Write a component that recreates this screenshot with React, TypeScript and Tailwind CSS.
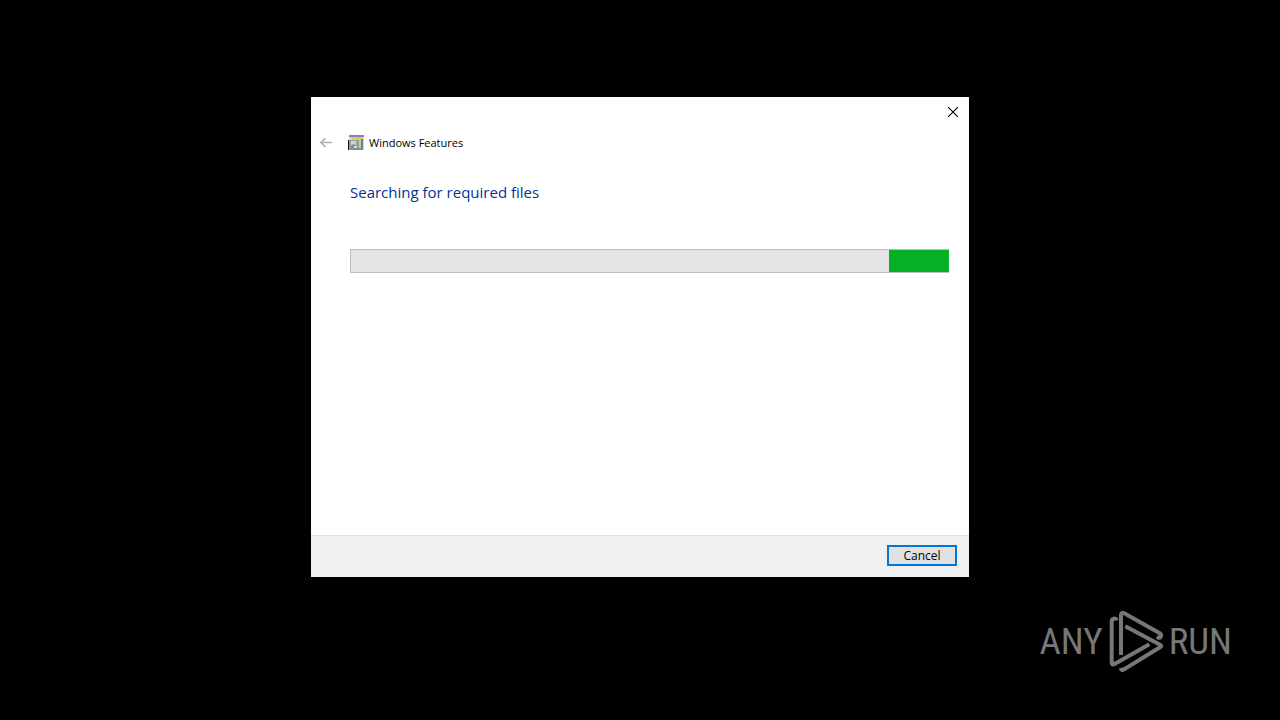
const BackIcon = () => (
  <svg viewBox="0 0 12 12" className="h-3 w-3" fill="none" stroke="currentColor" strokeWidth="1.6" aria-hidden="true">
    <path d="M12 5.5H1M5.5 1L1 5.5L5.5 10" />
  </svg>
);

const FeaturesIcon = () => (
  <svg viewBox="0 0 16 16" className="h-4 w-4" aria-hidden="true">
    <rect x="1" y="0" width="15" height="15" fill="#d3d6da" />
    <rect x="1" y="0" width="15" height="2" fill="#8380c8" />
    <rect x="3" y="2" width="11" height="1" fill="#b9b8ea" />
    <rect x="4" y="3" width="10" height="2" fill="#e8c860" />
    <rect x="13" y="4" width="2" height="9" fill="#4f86bd" />
    <rect x="11" y="5" width="2" height="8" fill="#e8c860" />
    <rect x="1" y="5" width="10" height="10" fill="#8fa39d" />
    <path d="M3 6h5v4H3z" fill="#c9d8d2" />
    <path d="M5 9l5 2v4H3v-4z" fill="#7b948c" />
    <path d="M6 11h3v2H6z" fill="#d5e0dc" />
    <rect x="10" y="13" width="5" height="2" fill="#7d8d92" />
    <rect x="0" y="5" width="1" height="10" fill="#111111" />
  </svg>
);

const CloseIcon = () => (
  <svg viewBox="0 0 10 10" className="h-[10px] w-[10px]" aria-hidden="true">
    <path d="M0 0L10 10M10 0L0 10" stroke="#000000" strokeWidth="1.1" />
  </svg>
);

const PlayLogo = () => (
  <svg viewBox="236 24 168 192" className="h-16 w-14" fill="none" stroke="#777777" strokeWidth="12" aria-hidden="true">
    <path d="M275 162V42Q275 32 285 37L390 96Q399 102 394 108Q390 112 382 108" />
    <path d="M262 58Q260 51 253 53Q247 55 247 62V184Q247 194 257 188L360 130" />
    <path d="M288 76L392 131Q399 135 392 139L284 205Q277 210 274 201" />
  </svg>
);

const Watermark = () => (
  <div className="absolute right-12 bottom-[47px] flex h-16 items-center gap-[5px] font-['Roboto_Condensed','Liberation_Sans_Narrow','Roboto',sans-serif] text-[37px] leading-none text-[#777777]">
    <span>ANY</span>
    <PlayLogo />
    <span>RUN</span>
  </div>
);

export default function App() {
  return (
    <main className="relative flex min-h-screen flex-col items-center bg-black pt-[97px] font-['Open_Sans','Noto_Sans',sans-serif] text-xs text-black">
      <section className="flex min-h-[480px] w-full max-w-[658px] flex-col bg-white" aria-labelledby="window-title">
        <div className="flex justify-end">
          <button type="button" aria-label="Close" className="flex h-[30px] w-8 items-center justify-center">
            <CloseIcon />
          </button>
        </div>

        <header className="flex h-[31px] items-center pl-[9px]">
          <button type="button" aria-label="Back" disabled className="mr-4 flex w-3 text-[#b0b0b0]">
            <BackIcon />
          </button>
          <FeaturesIcon />
          <span id="window-title" className="ml-[5px] text-[11px] leading-4">Windows Features</span>
        </header>

        <div className="flex-1 pt-[22px] pr-5 pl-[39px]">
          <h1 className="text-[15px] leading-6 text-[#003399]">Searching for required files</h1>
          <div
            role="progressbar"
            aria-label="Searching for required files"
            className="mt-[45px] flex h-6 justify-end border border-[#bcbcbc] bg-[#e6e6e6]"
          >
            <div className="-mr-px w-1/10 bg-[#06b025]" />
          </div>
        </div>

        <footer className="flex h-[42px] items-start justify-end border-t border-[#dfdfdf] bg-[#f0f0f0] px-3 pt-[9px]">
          <button type="button" className="h-[21px] w-[70px] border-2 border-[#0078d7] bg-[#e1e1e1] leading-4">
            Cancel
          </button>
        </footer>
      </section>

      <Watermark />
    </main>
  );
}
